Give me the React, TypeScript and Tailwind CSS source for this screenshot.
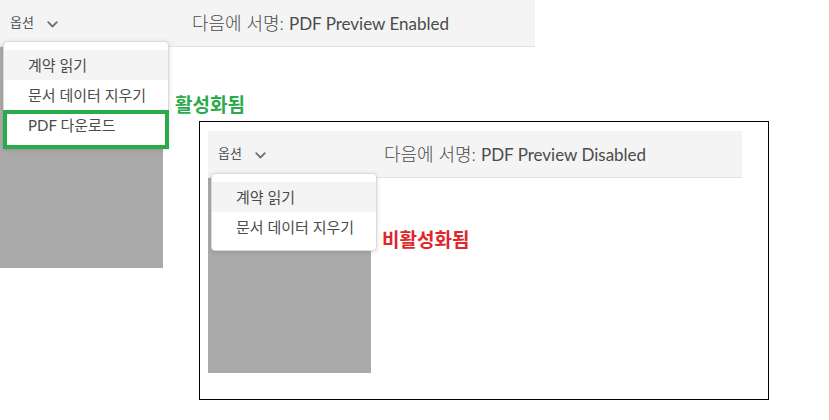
import { ReactNode } from "react";

const KR = "font-['Lato','Noto_Sans_CJK_KR',sans-serif]";

const Chevron = () => (
  <svg width="11" height="7" viewBox="0 0 11 7" className="ml-[13px] mt-[2px]">
    <path d="M1.2 1.2 L5.5 5.5 L9.8 1.2" fill="none" stroke="#707070" strokeWidth="1.8" strokeLinecap="round" strokeLinejoin="round" />
  </svg>
);

const Header = ({ title, titleOffset }: { title: string; titleOffset: string }) => (
  <div className="flex h-[47px] items-center border-b border-[#e2e2e2] bg-[#f4f4f4]">
    <div className="flex items-center pl-[10px] text-[13px] text-[#555]">
      옵션
      <Chevron />
    </div>
    <div className={`${titleOffset} flex items-baseline text-[#4b4b4b]`}>
      <span className="text-[18px] font-light">다음에 서명:</span>
      <span className="ml-[5px] text-[17px]">{title}</span>
    </div>
  </div>
);

const MenuItem = ({ children, active }: { children: ReactNode; active?: boolean }) => (
  <div className={`flex h-[30px] items-center pl-[24px] text-[15px] text-[#4b4b4b] ${active ? "bg-[#f4f4f4]" : ""}`}>
    {children}
  </div>
);

export default function App() {
  return (
    <div className={`relative h-[420px] w-[829px] overflow-hidden bg-white ${KR}`}>
      {/* enabled */}
      <div className="relative w-[535px]">
        <Header title="PDF Preview Enabled" titleOffset="ml-[134px]" />
        <div className="h-[221px] w-[163px] bg-[#aaaaaa]" />

        <div className="absolute left-[3px] top-[41px] w-[166px] rounded-[4px] border border-[#dadada] bg-white py-[8px] shadow-[0_1px_4px_rgba(0,0,0,0.15)]">
          <MenuItem active>계약 읽기</MenuItem>
          <MenuItem>문서 데이터 지우기</MenuItem>
          <MenuItem>PDF 다운로드</MenuItem>
          <div className="absolute bottom-[-1px] left-[-1px] right-[-1px] h-[39px] border-[4px] border-[#2aab4b]" />
        </div>

        <div className="absolute left-[175px] top-[91px] text-[19px] font-bold text-[#2aab4b]">활성화됨</div>
      </div>

      {/* disabled */}
      <div className="absolute left-[199px] top-[121px] h-[279px] w-[570px] border border-black pl-[8px] pt-[9px]">
        <div className="w-[534px]">
          <Header title="PDF Preview Disabled" titleOffset="ml-[118px]" />
          <div className="h-[195px] w-[163px] bg-[#aaaaaa]" />
        </div>

        <div className="absolute left-[11px] top-[51px] w-[166px] rounded-[4px] border border-[#dadada] bg-white py-[8px] shadow-[0_1px_4px_rgba(0,0,0,0.15)]">
          <MenuItem active>계약 읽기</MenuItem>
          <MenuItem>문서 데이터 지우기</MenuItem>
        </div>

        <div className="absolute left-[182px] top-[104px] text-[19px] font-bold text-[#e0262b]">비활성화됨</div>
      </div>
    </div>
  );
}
